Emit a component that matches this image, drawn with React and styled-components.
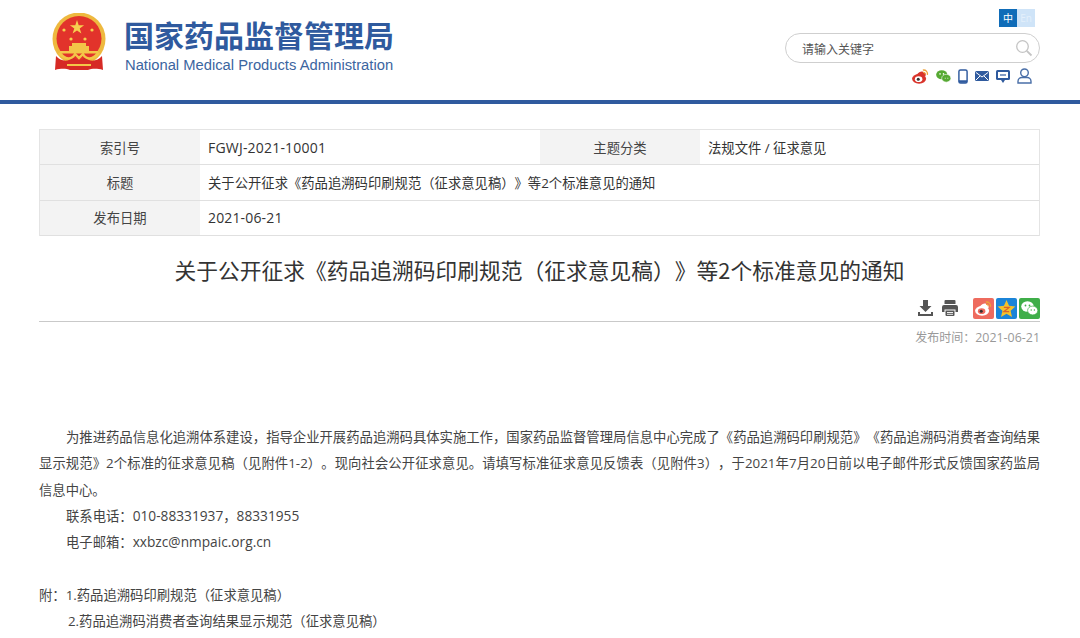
import React from 'react';
import styled, { createGlobalStyle } from 'styled-components';

const GlobalStyle = createGlobalStyle`
  html, body {
    margin: 0;
    padding: 0;
    background: #fff;
    overflow: hidden;
  }
  * {
    box-sizing: border-box;
  }
  body {
    font-family: "Open Sans", "Noto Sans CJK SC", sans-serif;
    color: #333;
    text-spacing-trim: space-all;
  }
`;

const Page = styled.div`
  width: 1080px;
  height: 638px;
  overflow: hidden;
`;

const Header = styled.header`
  height: 104px;
  border-bottom: 4px solid #2f5a9e;
  padding: 9px 40px 0 52px;
  display: flex;
  justify-content: space-between;
`;

const Brand = styled.div`
  display: flex;
  align-items: flex-start;
  gap: 18px;
  padding-top: 4px;
`;

const BrandText = styled.div`
  padding-top: 2px;
`;

const BrandName = styled.div`
  font-family: "Noto Sans CJK SC", sans-serif;
  font-size: 30px;
  font-weight: 700;
  line-height: 38px;
  color: #2f5a9e;
  white-space: nowrap;
`;

const BrandEnglish = styled.div`
  font-family: "Liberation Sans", sans-serif;
  font-size: 14.75px;
  line-height: 18px;
  margin-top: 3px;
  margin-left: 1px;
  color: #3c659f;
  white-space: nowrap;
`;

const Tools = styled.div`
  width: 255px;
  display: flex;
  flex-direction: column;
  align-items: flex-end;
`;

const LangSwitch = styled.div`
  display: flex;
  margin-right: 5px;
`;

const Lang = styled.span`
  width: 18px;
  height: 18px;
  font-size: 10px;
  line-height: 18px;
  text-align: center;
  color: ${p => (p.$active ? '#fff' : '#e4f0fb')};
  background: ${p => (p.$active ? '#0f6cb8' : '#cfe4f8')};
`;

const Search = styled.div`
  width: 255px;
  height: 30px;
  margin-top: 6px;
  border: 1px solid #cfcfcf;
  border-radius: 15px;
  padding: 0 6px 0 16px;
  display: flex;
  align-items: center;
  justify-content: space-between;
  font-family: "Noto Sans CJK SC", sans-serif;
  font-size: 12px;
  color: #555;
`;

const Socials = styled.div`
  display: flex;
  align-items: center;
  gap: 7px;
  margin-top: 4px;
  margin-right: 8px;
  height: 18px;
`;

const Content = styled.main`
  padding: 25px 40px 0 39px;
`;

const InfoTable = styled.div`
  display: grid;
  grid-template-columns: 160px 340px 160px 1fr;
  grid-auto-rows: 35.4px;
  border: 1px solid #e4e4e4;
  border-bottom: 0;
`;

const Label = styled.div`
  background: #f3f3f3;
  border-bottom: 1px solid #e0e0e0;
  display: flex;
  align-items: center;
  justify-content: center;
  font-size: 13.33px;
  color: #444;
`;

const Value = styled.div`
  grid-column: ${p => (p.$wide ? 'span 3' : 'auto')};
  border-bottom: 1px solid #e0e0e0;
  display: flex;
  align-items: center;
  padding-left: 8px;
  font-size: 13.33px;
  color: #333;
`;

const Latin = styled.span`
  font-size: ${p => p.$size || 14}px;
  letter-spacing: ${p => p.$spacing || 0.15}px;
`;

const Title = styled.h1`
  margin: 19px 0 0;
  font-family: "Noto Sans CJK SC", sans-serif;
  font-size: 21.75px;
  font-weight: 400;
  line-height: 30px;
  text-align: center;
  color: #333;
`;

const ShareBar = styled.div`
  height: 37px;
  border-bottom: 1px solid #c9c9c9;
  display: flex;
  align-items: center;
  justify-content: flex-end;
  padding: 10px 0 0;
`;

const ShareGroup = styled.div`
  display: flex;
  align-items: center;
  gap: ${p => p.$gap}px;
  margin-left: ${p => p.$offset || 0}px;
`;

const ShareTile = styled.span`
  width: 21px;
  height: 21px;
  border-radius: 2px;
  background: ${p => p.$color};
  display: flex;
  align-items: center;
  justify-content: center;
`;

const PublishDate = styled.div`
  margin-top: 6px;
  text-align: right;
  font-size: 12px;
  line-height: 20px;
  color: #999;
`;

const Article = styled.article`
  margin-top: 76px;
  font-size: 13.33px;
  line-height: 26.2px;
  color: #444;
`;

const Para = styled.p`
  margin: 0;
  text-indent: ${p => p.$indent || 0}px;
  text-align: justify;
`;

const Spacer = styled.div`
  height: 26.5px;
`;

const Emblem = () => (
  <svg width="54" height="58" viewBox="0 0 54 58">
    <circle cx="27" cy="26" r="26.500" fill="#eeb93f" />
    <circle cx="27" cy="25.500" r="22.500" fill="#e2332b" />
    <path d="M25 7l1.700 5.200h5.400l-4.400 3.200 1.700 5.200-4.400-3.200-4.400 3.200 1.700-5.200-4.400-3.200h5.400z" fill="#f6d04f" />
    <circle cx="12" cy="17" r="1.600" fill="#f6d04f" />
    <circle cx="19" cy="26" r="1.600" fill="#f6d04f" />
    <circle cx="33" cy="26" r="1.600" fill="#f6d04f" />
    <circle cx="40" cy="17" r="1.600" fill="#f6d04f" />
    <path d="M20 30h14v3h3v5H17v-5h3z" fill="#f3c648" />
    <path d="M8 38h38v2.500H8z" fill="#f3c648" />
    <path d="M4 43c5 6 13 6 17 1 3 4 9 4 12 0 4 5 12 5 17-1l1 14c-7-2-12-1-15 0H18c-3-1-8-2-15 0z" fill="#d62a25" />
    <path d="M7 40c6 7 13 7 16 1l4 4 4-4c3 6 10 6 16-1" fill="none" stroke="#f3c648" strokeWidth="2.400" />
    <path d="M15 51h24v2H15z" fill="#f3c648" />
  </svg>
);

const SearchIcon = () => (
  <svg width="18" height="18" viewBox="0 0 18 18" fill="none" stroke="#c4c4c4" strokeWidth="1.300">
    <circle cx="7.500" cy="7.500" r="5.800" />
    <path d="M11.800 11.800L16.500 16.500" strokeWidth="1.800" />
  </svg>
);

const WeiboIcon = ({ color = '#d9342b', eye = '#fff' }) => (
  <svg width="17" height="15" viewBox="0 0 18 16">
    <ellipse cx="7.500" cy="10.500" rx="7.500" ry="5.200" fill={color} />
    <path d="M5 6c3-4 7-4 7-2 3-.5 3 2 2 4" fill={color} />
    <ellipse cx="7" cy="10.800" rx="4" ry="3" fill={eye} />
    <circle cx="6.600" cy="11" r="1.600" fill="#333" />
    <path d="M11.500 1.200c3-.6 5.500 1.800 4.800 5" fill="none" stroke="#eea23a" strokeWidth="1.400" />
    <path d="M11.800 3.600c1.500-.3 2.500.8 2.200 2.200" fill="none" stroke="#eea23a" strokeWidth="1.200" />
  </svg>
);

const WechatIcon = () => (
  <svg width="15" height="13" viewBox="0 0 17 15">
    <ellipse cx="6.500" cy="5.500" rx="6.500" ry="5.300" fill="#56a933" />
    <ellipse cx="11.700" cy="9.500" rx="5.300" ry="4.500" fill="#56a933" stroke="#fff" strokeWidth=".7" />
    <circle cx="4.500" cy="4.500" r=".9" fill="#fff" />
    <circle cx="8.500" cy="4.500" r=".9" fill="#fff" />
    <path d="M10 9.500h1M13 9.500h1" stroke="#fff" strokeWidth="1" />
  </svg>
);

const PhoneIcon = () => (
  <svg width="10" height="15" viewBox="0 0 11 16">
    <rect x="1" y=".8" width="9" height="14.400" rx="1.800" fill="#fff" stroke="#2f5a9e" strokeWidth="1.600" />
    <path d="M1 12h9v2a1 1 0 0 1-1 1H2a1 1 0 0 1-1-1z" fill="#2f5a9e" />
  </svg>
);

const MailIcon = () => (
  <svg width="14" height="12" viewBox="0 0 14 12">
    <rect y="1" width="14" height="10" rx="1.500" fill="#2f5a9e" />
    <path d="M1 2.500l6 4.500 6-4.500M1 10l4-4M13 10L9 6" fill="none" stroke="#fff" strokeWidth="1" />
  </svg>
);

const ScreenIcon = () => (
  <svg width="14" height="15" viewBox="0 0 14 15">
    <rect y="1" width="14" height="10" rx="1.500" fill="#2f5a9e" />
    <rect x="2" y="3" width="10" height="6" fill="#fff" />
    <path d="M4 6h6" stroke="#2f5a9e" strokeWidth="1.200" />
    <path d="M5 11h4l-2 3z" fill="#2f5a9e" />
  </svg>
);

const UserIcon = () => (
  <svg width="15" height="16" viewBox="0 0 15 16" fill="none" stroke="#4a6fa8" strokeWidth="1.400">
    <circle cx="7.500" cy="4.800" r="3.800" />
    <path d="M1 15v-1.500c0-2.500 2-4 3.800-4h5.400c1.800 0 3.800 1.500 3.800 4V15z" />
  </svg>
);

const DownloadIcon = () => (
  <svg width="15" height="16" viewBox="0 0 15 16" fill="#555">
    <path d="M5 0h5v6h3.500l-6 6-6-6H5z" />
    <path d="M0 12h2v2h11v-2h2v4H0z" />
  </svg>
);

const PrintIcon = () => (
  <svg width="16" height="16" viewBox="0 0 16 16" fill="#555">
    <path d="M3.500 0h9a1 1 0 0 1 1 1v3h-11V1a1 1 0 0 1 1-1z" />
    <path d="M2 5h12a2 2 0 0 1 2 2v5h-2.500V9.500h-11V12H0V7a2 2 0 0 1 2-2z" />
    <path d="M3.500 10.500h9V15a1 1 0 0 1-1 1h-7a1 1 0 0 1-1-1z" />
    <path d="M5 12.500h6M5 14.300h6" stroke="#fff" strokeWidth=".9" />
  </svg>
);

const StarIcon = () => (
  <svg width="19" height="19" viewBox="0 0 18 18">
    <path d="M9 1l2.400 5.500 6 .6-4.500 4 1.300 5.900L9 14l-5.200 3 1.300-5.900-4.500-4 6-.6z" fill="#f4c22b" />
    <path d="M6.500 8h5l-5 4h5" fill="none" stroke="#d9642b" strokeWidth="1.200" />
  </svg>
);

const ShareWechat = () => (
  <svg width="17" height="15" viewBox="0 0 17 15">
    <ellipse cx="6.500" cy="5.500" rx="6.300" ry="5.200" fill="#fff" />
    <ellipse cx="11.700" cy="9.500" rx="5.100" ry="4.400" fill="#fff" stroke="#3fae49" strokeWidth=".7" />
    <circle cx="4.500" cy="4.500" r=".9" fill="#3fae49" />
    <circle cx="8.500" cy="4.500" r=".9" fill="#3fae49" />
    <circle cx="10.200" cy="9" r=".7" fill="#3fae49" />
    <circle cx="13.400" cy="9" r=".7" fill="#3fae49" />
  </svg>
);

const App = () => (
  <Page>
    <GlobalStyle />
    <Header>
      <Brand>
        <Emblem />
        <BrandText>
          <BrandName>国家药品监督管理局</BrandName>
          <BrandEnglish>National Medical Products Administration</BrandEnglish>
        </BrandText>
      </Brand>
      <Tools>
        <LangSwitch>
          <Lang $active>中</Lang>
          <Lang>En</Lang>
        </LangSwitch>
        <Search>
          <span>请输入关键字</span>
          <SearchIcon />
        </Search>
        <Socials>
          <WeiboIcon />
          <WechatIcon />
          <PhoneIcon />
          <MailIcon />
          <ScreenIcon />
          <UserIcon />
        </Socials>
      </Tools>
    </Header>
    <Content>
      <InfoTable>
        <Label>索引号</Label>
        <Value><Latin $spacing={0.2}>FGWJ-2021-10001</Latin></Value>
        <Label>主题分类</Label>
        <Value>法规文件 / 征求意见</Value>
        <Label>标题</Label>
        <Value $wide>关于公开征求《药品追溯码印刷规范（征求意见稿）》等2个标准意见的通知</Value>
        <Label>发布日期</Label>
        <Value $wide><Latin>2021-06-21</Latin></Value>
      </InfoTable>
      <Title>关于公开征求《药品追溯码印刷规范（征求意见稿）》等2个标准意见的通知</Title>
      <ShareBar>
        <ShareGroup $gap={9}>
          <DownloadIcon />
          <PrintIcon />
        </ShareGroup>
        <ShareGroup $gap={2} $offset={15}>
          <ShareTile $color="#ee6b5e"><WeiboIcon color="#fff" eye="#ee6b5e" /></ShareTile>
          <ShareTile $color="#1b84d8"><StarIcon /></ShareTile>
          <ShareTile $color="#3fae49"><ShareWechat /></ShareTile>
        </ShareGroup>
      </ShareBar>
      <PublishDate>发布时间：<Latin $size={12.4} $spacing={0.01}>2021-06-21</Latin></PublishDate>
      <Article>
        <Para $indent={27}>
          为推进药品信息化追溯体系建设，指导企业开展药品追溯码具体实施工作，国家药品监督管理局信息中心完成了《药品追溯码印刷规范》《药品追溯码消费者查询结果显示规范》2个标准的征求意见稿（见附件1-2）。现向社会公开征求意见。请填写标准征求意见反馈表（见附件3），于2021年7月20日前以电子邮件形式反馈国家药监局信息中心。
        </Para>
        <Para $indent={27}>联系电话：<Latin $size={13.7} $spacing={0.01}>010-88331937</Latin>，<Latin $size={13.7} $spacing={0.01}>88331955</Latin></Para>
        <Para $indent={27}>电子邮箱：<Latin $size={13.7} $spacing={0.01}>xxbzc@nmpaic.org.cn</Latin></Para>
        <Spacer />
        <Para>附：1.药品追溯码印刷规范（征求意见稿）</Para>
        <Para $indent={29}>2.药品追溯码消费者查询结果显示规范（征求意见稿）</Para>
      </Article>
    </Content>
  </Page>
);

export default App;
